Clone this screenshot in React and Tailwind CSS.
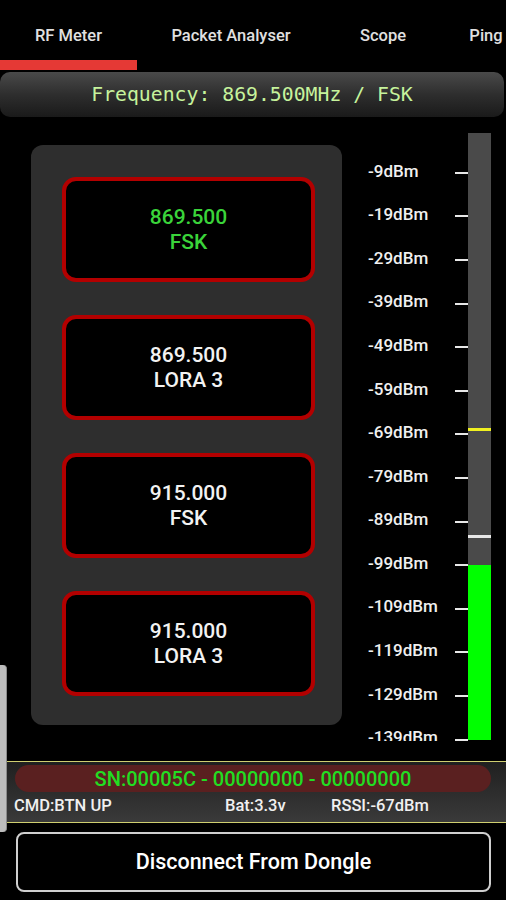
import React from 'react';

const tabs = [
  { label: 'RF Meter', w: 'w-[137px]', active: true },
  { label: 'Packet Analyser', w: 'w-[188px]' },
  { label: 'Scope', w: 'w-[116px]' },
  { label: 'Ping', w: 'w-[90px]' },
];

const channels = [
  { freq: '869.500', mode: 'FSK', active: true },
  { freq: '869.500', mode: 'LORA 3' },
  { freq: '915.000', mode: 'FSK' },
  { freq: '915.000', mode: 'LORA 3' },
];

const levels = [-9, -19, -29, -39, -49, -59, -69, -79, -89, -99, -109, -119, -129, -139];

const sans = { fontFamily: 'Roboto, "Liberation Sans", sans-serif' };

const App = () => {
  return (
    <div className="relative w-[506px] h-[900px] bg-black overflow-hidden text-white" style={sans}>
      {/* tabs */}
      <div className="flex h-[70px] whitespace-nowrap">
        {tabs.map((t) => (
          <div key={t.label} className={`${t.w} shrink-0 flex flex-col`}>
            <div className="flex-1 flex items-center justify-center pt-[12px] text-[16.5px] font-medium text-[#e0e0e0]">
              {t.label}
            </div>
            <div className={`h-[10px] ${t.active ? 'bg-[#e53935]' : ''}`} />
          </div>
        ))}
      </div>

      {/* frequency bar */}
      <div className="mt-[2px] mr-[2px] h-[45px] rounded-[10px] bg-gradient-to-b from-[#4a4a4a] via-[#2e2e2e] to-[#1a1a1a] flex items-center justify-center">
        <span
          className="text-[19.8px] text-[#c6f39c]"
          style={{ fontFamily: '"DejaVu Sans Mono", "Liberation Mono", monospace' }}
        >
          Frequency: 869.500MHz / FSK
        </span>
      </div>

      {/* main area */}
      <div className="flex h-[644px]">
        <div className="ml-[31px] mt-[28px] w-[311px] h-[580px] rounded-[12px] bg-[#2e2e2e] pt-[32px] pl-[31px] pr-[27px] flex flex-col gap-[33px]">
          {channels.map((c, i) => (
            <div
              key={i}
              className="h-[105px] rounded-[14px] border-[4px] border-[#b30000] bg-black flex flex-col items-center justify-center text-[21px] leading-[25px] font-medium"
            >
              <span className={c.active ? 'text-[#3ad43a]' : 'text-[#f2f2f2]'}>{c.freq}</span>
              <span className={c.active ? 'text-[#3ad43a]' : 'text-[#f2f2f2]'}>{c.mode}</span>
            </div>
          ))}
        </div>

        <div className="ml-[26px] mt-[16px] h-[608px] flex overflow-hidden">
          <div className="pt-[18px] w-[100px] flex flex-col">
            {levels.map((l) => (
              <div key={l} className="h-[43.6px] shrink-0 flex items-center">
                <span className="w-[87px] -mt-[3px] text-[17px] font-medium text-[#f0f0f0]">{l}dBm</span>
                <span className="w-[13px] h-[2px] bg-[#e8e8e8]" />
              </div>
            ))}
          </div>
          <div className="relative w-[23px] h-[607px] bg-[#4a4a4a] flex flex-col justify-end">
            <div className="absolute left-0 right-0 top-[295px] h-[3px] bg-[#f0f020]" />
            <div className="absolute left-0 right-0 top-[402px] h-[3px] bg-[#e8e8e8]" />
            <div className="h-[175px] bg-[#00ff00]" />
          </div>
        </div>
      </div>

      {/* status strip */}
      <div className="h-[62px] border-y-[1.5px] border-[#cfcf70] bg-gradient-to-b from-[#202020] to-[#3a3a3a] flex flex-col">
        <div className="mt-[3px] mx-[15px] h-[27px] rounded-full bg-[#5a2020] flex items-center justify-center">
          <span className="text-[20px] font-medium text-[#22dd22]">SN:00005C - 00000000 - 00000000</span>
        </div>
        <div className="flex items-center h-[28px] text-[16.5px] font-medium text-[#f0f0f0] whitespace-nowrap">
          <span className="ml-[14px] w-[211px]">CMD:BTN UP</span>
          <span className="w-[106px]">Bat:3.3v</span>
          <span>RSSI:-67dBm</span>
        </div>
      </div>

      {/* disconnect */}
      <button className="mt-[9px] ml-[16px] w-[475px] h-[60px] rounded-[8px] border-2 border-[#cfcfcf] bg-black flex items-center justify-center text-[21.5px] font-medium text-white">
        Disconnect From Dongle
      </button>

      {/* drawer handle */}
      <div className="absolute left-0 top-[665px] w-[7px] h-[167px] rounded-r-[4px] bg-[#bdbdbd] border-r border-[#8a8a8a]" />
    </div>
  );
};

export default App;
